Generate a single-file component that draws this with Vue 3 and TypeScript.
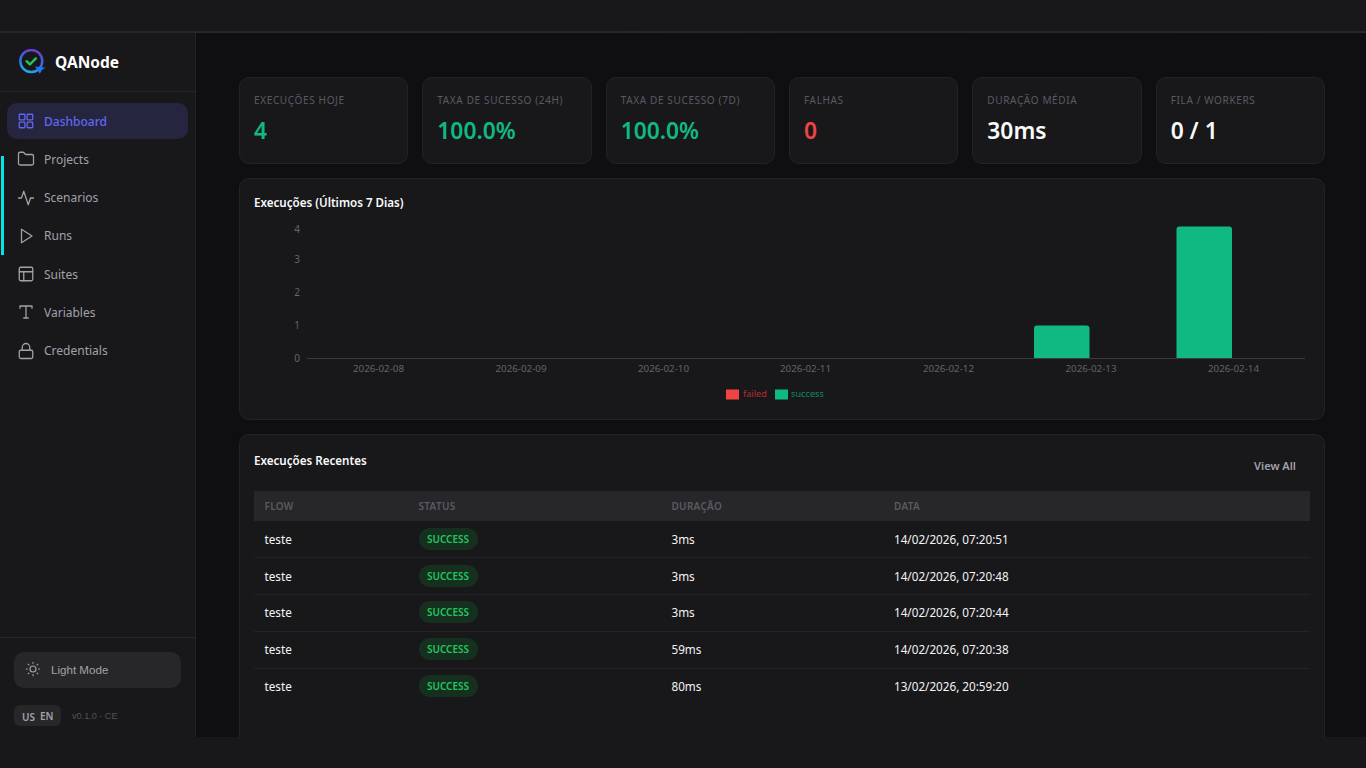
<script setup lang="ts">
const nav = [
  { label: 'Dashboard', icon: 'grid', active: true },
  { label: 'Projects', icon: 'folder' },
  { label: 'Scenarios', icon: 'pulse' },
  { label: 'Runs', icon: 'play' },
  { label: 'Suites', icon: 'layout' },
  { label: 'Variables', icon: 'type' },
  { label: 'Credentials', icon: 'lock' },
]
const stats = [
  { label: 'EXECUÇÕES HOJE', value: '4', tone: 'green' },
  { label: 'TAXA DE SUCESSO (24H)', value: '100.0%', tone: 'green' },
  { label: 'TAXA DE SUCESSO (7D)', value: '100.0%', tone: 'green' },
  { label: 'FALHAS', value: '0', tone: 'red' },
  { label: 'DURAÇÃO MÉDIA', value: '30ms', tone: 'white' },
  { label: 'FILA / WORKERS', value: '0 / 1', tone: 'white' },
]
const runs = [
  { d: '3ms', t: '14/02/2026, 07:20:51' },
  { d: '3ms', t: '14/02/2026, 07:20:48' },
  { d: '3ms', t: '14/02/2026, 07:20:44' },
  { d: '59ms', t: '14/02/2026, 07:20:38' },
  { d: '80ms', t: '13/02/2026, 20:59:20' },
]
const yTicks = [
  { l: '4', y: 9 },
  { l: '3', y: 39 },
  { l: '2', y: 72 },
  { l: '1', y: 105 },
  { l: '0', y: 138 },
]
const xTicks = [
  { l: '2026-02-08', x: 124.5 },
  { l: '2026-02-09', x: 267 },
  { l: '2026-02-10', x: 409.5 },
  { l: '2026-02-11', x: 551.5 },
  { l: '2026-02-12', x: 694.5 },
  { l: '2026-02-13', x: 837 },
  { l: '2026-02-14', x: 979.5 },
]
</script>

<template>
  <div class="frame">
    <div class="topbar"></div>
    <div class="shell">
      <aside class="sidebar">
        <div class="brand">
          <svg class="logo" width="28" height="26" viewBox="0 0 28 26" fill="none">
            <defs>
              <linearGradient id="ring" x1="14" y1="0" x2="7" y2="24" gradientUnits="userSpaceOnUse">
                <stop offset="0" stop-color="#6d3bd6" />
                <stop offset="0.55" stop-color="#2f6fe8" />
                <stop offset="1" stop-color="#1eb4ea" />
              </linearGradient>
            </defs>
            <circle cx="13.3" cy="12" r="11" stroke="url(#ring)" stroke-width="2.5" />
            <path d="M8.5 12.2l3.4 3.2 6-6" stroke="#22c55e" stroke-width="2.4" stroke-linecap="round" stroke-linejoin="round" />
            <path d="M17 17.5l10.5 1.3-3.6 2.2-2 3.7z" fill="#2079f0" />
          </svg>
          <span class="brand-name">QANode</span>
        </div>
        <nav class="nav">
          <a v-for="item in nav" :key="item.label" class="nav-item" :class="{ active: item.active }">
            <svg class="nav-icon" width="18" height="18" viewBox="0 0 24 24" fill="none" stroke="currentColor" stroke-width="1.7" stroke-linecap="round" stroke-linejoin="round">
              <template v-if="item.icon === 'grid'">
                <rect x="3" y="3" width="7.5" height="7.5" rx="1" /><rect x="13.5" y="3" width="7.5" height="7.5" rx="1" /><rect x="3" y="13.5" width="7.5" height="7.5" rx="1" /><rect x="13.5" y="13.5" width="7.5" height="7.5" rx="1" />
              </template>
              <path v-else-if="item.icon === 'folder'" d="M20 20a2 2 0 0 0 2-2V8a2 2 0 0 0-2-2h-7.9a2 2 0 0 1-1.69-.9L9.6 3.9A2 2 0 0 0 7.93 3H4a2 2 0 0 0-2 2v13a2 2 0 0 0 2 2Z" />
              <path v-else-if="item.icon === 'pulse'" d="M22 12h-4l-3 9L9 3l-3 9H2" />
              <path v-else-if="item.icon === 'play'" d="M6 3l14 9-14 9V3z" />
              <template v-else-if="item.icon === 'layout'">
                <rect x="3" y="3" width="18" height="18" rx="2" /><path d="M3 9h18M9 21V9" />
              </template>
              <path v-else-if="item.icon === 'type'" d="M4 7V4h16v3M9 20h6M12 4v16" />
              <template v-else-if="item.icon === 'lock'">
                <rect x="3" y="11" width="18" height="11" rx="2" /><path d="M7 11V7a5 5 0 0 1 10 0v4" />
              </template>
            </svg>
            <span>{{ item.label }}</span>
          </a>
        </nav>
        <div class="side-foot">
          <button class="theme-btn" type="button">
            <svg width="16" height="16" viewBox="0 0 24 24" fill="none" stroke="currentColor" stroke-width="1.7" stroke-linecap="round">
              <circle cx="12" cy="12" r="4.5" />
              <path d="M12 2v1.5M12 20.5V22M4.9 4.9l1 1M18.1 18.1l1 1M2 12h1.5M20.5 12H22M4.9 19.1l1-1M18.1 5.9l1-1" />
            </svg>
            <span>Light Mode</span>
          </button>
          <div class="lang-row">
            <span class="lang"><span class="flag">US</span><span>EN</span></span>
            <span class="version">v0.1.0 - CE</span>
          </div>
        </div>
      </aside>
      <main class="main">
        <section class="stats">
          <div v-for="s in stats" :key="s.label" class="stat">
            <div class="stat-label">{{ s.label }}</div>
            <div class="stat-value" :class="s.tone">{{ s.value }}</div>
          </div>
        </section>
        <section class="card chart-card">
          <h3 class="card-title">Execuções (Últimos 7 Dias)</h3>
          <svg class="chart" width="1056" height="184" viewBox="0 0 1056 184">
            <text v-for="t in yTicks" :key="t.l" class="tick" x="46" :y="t.y + 3.5" text-anchor="end">{{ t.l }}</text>
            <line x1="53" y1="138.5" x2="1051" y2="138.5" stroke="#3a3a3f" stroke-width="1" />
            <path d="M780 138V108.5a3 3 0 0 1 3-3h49.5a3 3 0 0 1 3 3V138z" fill="#10b981" />
            <path d="M922.5 138V9.5a3 3 0 0 1 3-3h49.5a3 3 0 0 1 3 3V138z" fill="#10b981" />
            <text v-for="t in xTicks" :key="t.l" class="tick x" :x="t.x" y="152" text-anchor="middle">{{ t.l }}</text>
            <rect x="472" y="169.5" width="13" height="10" fill="#ef4444" />
            <text class="legend failed" x="489" y="177">failed</text>
            <rect x="521" y="169.5" width="13" height="10" fill="#10b981" />
            <text class="legend success" x="537" y="177">success</text>
          </svg>
        </section>
        <section class="card recent-card">
          <div class="recent-head">
            <h3 class="card-title">Execuções Recentes</h3>
            <a class="view-all">View All</a>
          </div>
          <table class="table">
            <colgroup>
              <col class="c1" /><col class="c2" /><col class="c3" /><col />
            </colgroup>
            <thead>
              <tr><th>FLOW</th><th>STATUS</th><th>DURAÇÃO</th><th>DATA</th></tr>
            </thead>
            <tbody>
              <tr v-for="r in runs" :key="r.t">
                <td>teste</td>
                <td><span class="pill">SUCCESS</span></td>
                <td>{{ r.d }}</td>
                <td>{{ r.t }}</td>
              </tr>
            </tbody>
          </table>
        </section>
      </main>
    </div>
    <div class="accent"></div>
  </div>
</template>

<style>
html, body { margin: 0; background: #18181b; }
</style>

<style scoped>
.frame {
  position: relative;
  display: flex;
  flex-direction: column;
  height: 768px;
  overflow: hidden;
  background: #18181b;
  color: #fafafa;
  font-family: "Noto Sans", "Open Sans", sans-serif;
}
.topbar {
  flex: none;
  height: 33px;
  background:
    linear-gradient(90deg, #1d2a35 0%, #1d2a35 45%, #252527 60%, #282822 100%) bottom / 100% 2px no-repeat,
    #18181b;
}
.shell {
  flex: none;
  display: flex;
  height: 704px;
  overflow: hidden;
  margin-bottom: 31px;
  background: #0f0f11;
}
.accent {
  position: absolute;
  left: 1px;
  top: 156px;
  width: 3px;
  height: 99px;
  background: #00e5e5;
}
.sidebar {
  flex: none;
  display: flex;
  flex-direction: column;
  width: 195px;
  background: #18181b;
  border-right: 1px solid #232326;
}
.brand {
  display: flex;
  align-items: center;
  gap: 9px;
  height: 58px;
  padding-left: 18px;
  border-bottom: 1px solid #27272a;
  flex: none;
}
.brand-name {
  font-size: 15.5px;
  font-weight: 700;
  color: #fff;
}
.nav {
  display: flex;
  flex-direction: column;
  gap: 2.3px;
  padding: 11px 7px 0;
  flex: 1;
}
.nav-item {
  display: flex;
  align-items: center;
  gap: 9px;
  height: 36px;
  padding-left: 10px;
  border-radius: 10px;
  font-size: 12px;
  color: #a1a1aa;
}
.nav-item.active {
  background: #25253f;
  color: #6366f1;
  font-weight: 500;
}
.nav-icon { flex: none; }
.side-foot {
  flex: none;
  height: 100px;
  border-top: 1px solid #27272a;
  padding: 14px 14px 0;
  box-sizing: border-box;
}
.theme-btn {
  display: flex;
  align-items: center;
  gap: 10px;
  width: 167px;
  height: 36px;
  padding: 0 0 2px 11px;
  border: 0;
  border-radius: 10px;
  background: #27272a;
  color: #a1a1aa;
  font-family: "Liberation Sans", Arial, sans-serif;
  font-size: 11.6px;
}
.lang-row {
  display: flex;
  align-items: center;
  gap: 11px;
  margin-top: 17px;
}
.lang {
  display: flex;
  align-items: center;
  gap: 5px;
  box-sizing: border-box;
  width: 47px;
  height: 21px;
  padding-left: 8px;
  border-radius: 6px;
  background: #27272a;
  color: #a1a1aa;
  font-size: 10px;
  font-weight: 600;
}
.flag { position: relative; top: 1px; }
.version {
  font-family: "Liberation Sans", Arial, sans-serif;
  font-size: 9.1px;
  color: #52525b;
}
.main {
  flex: 1;
  min-width: 0;
  padding: 44px 41px 0 43px;
  display: flex;
  flex-direction: column;
  gap: 14px;
}
.stats {
  display: grid;
  grid-template-columns: repeat(6, 1fr);
  gap: 14px;
  flex: none;
}
.stat, .card {
  background: #18181b;
  border: 1px solid #232326;
  border-radius: 10px;
  box-sizing: border-box;
}
.stat {
  height: 87px;
  padding: 14px 14px 0;
}
.stat-label {
  font-size: 10px;
  line-height: 16px;
  letter-spacing: 0.64px;
  color: #5a5a63;
  white-space: nowrap;
}
.stat-value {
  margin-top: 7px;
  font-size: 22.8px;
  line-height: 32px;
  font-weight: 600;
}
.green { color: #10b981; }
.red { color: #ef4444; }
.white { color: #fafafa; }
.chart-card {
  flex: none;
  height: 242px;
  padding: 15px 14px 0;
}
.card-title {
  margin: 0;
  font-size: 11.6px;
  line-height: 18px;
  font-weight: 600;
  color: #fafafa;
}
.chart {
  display: block;
  margin-top: 8px;
}
.tick {
  font-size: 10px;
  fill: #63636b;
}
.tick.x { font-size: 9.8px; }
.legend { font-size: 9.2px; }
.legend.failed { fill: #b22f2f; }
.legend.success { fill: #0e8a62; }
.recent-card {
  flex: 1;
  min-height: 0;
  padding: 17px 14px 0;
  border-bottom: 0;
  border-radius: 10px 10px 0 0;
}
.recent-head {
  display: flex;
  justify-content: space-between;
  height: 39px;
}
.view-all {
  margin: 5px 14px 0 0;
  font-size: 11px;
  line-height: 18px;
  font-weight: 600;
  color: #a1a1aa;
}
.table {
  width: 100%;
  border-collapse: collapse;
  table-layout: fixed;
  font-size: 11.7px;
}
.c1 { width: 154.5px; }
.c2 { width: 252.5px; }
.c3 { width: 222.5px; }
th {
  height: 30px;
  padding: 0 0 0 10.5px;
  background: #27272a;
  text-align: left;
  font-size: 10px;
  font-weight: 600;
  letter-spacing: 0.3px;
  color: #5a5a63;
}
td {
  height: 36.75px;
  padding: 0 0 0 10.5px;
  box-sizing: border-box;
  border-bottom: 1px solid #232326;
  color: #f4f4f5;
}
tr:nth-child(n+3) td { padding-bottom: 1px; }
tr:last-child td { border-bottom: 0; }
td:nth-child(2), th:nth-child(2) { padding-left: 10px; }
.pill {
  display: inline-flex;
  align-items: center;
  justify-content: center;
  width: 59px;
  height: 22px;
  border-radius: 11px;
  background: #16301f;
  color: #22c55e;
  font-size: 10px;
  font-weight: 600;
  vertical-align: middle;
}
</style>
